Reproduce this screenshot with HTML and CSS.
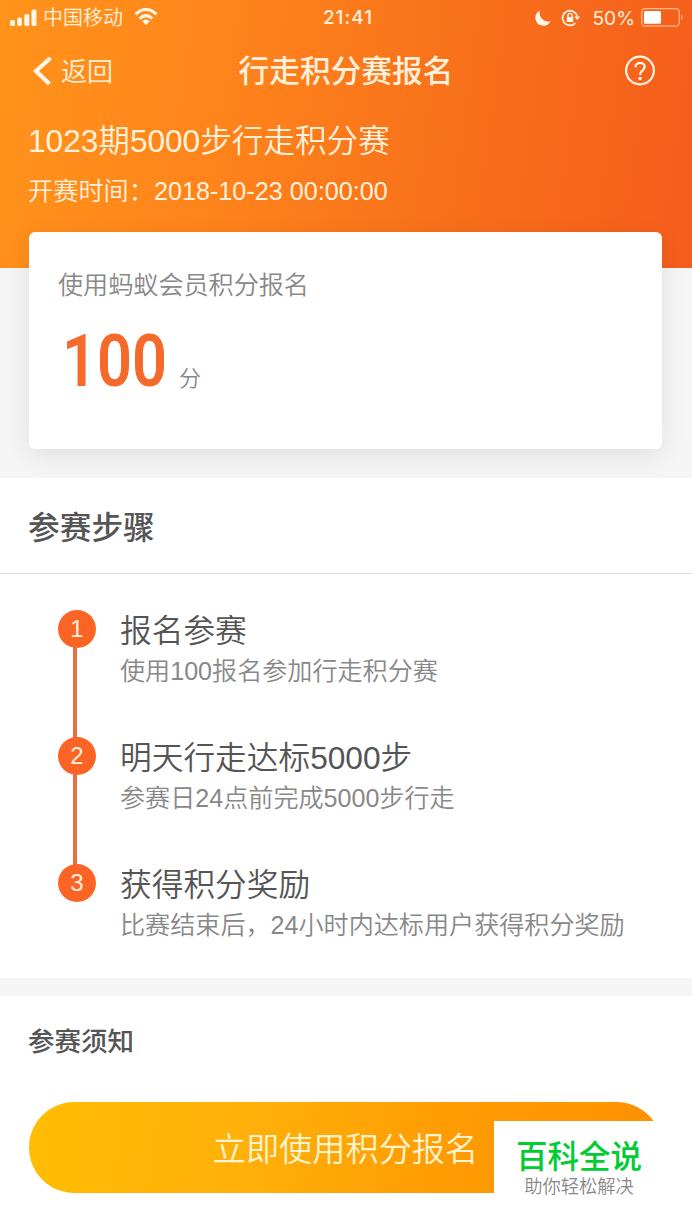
FILE: index.html
```
<!DOCTYPE html>
<html lang="zh-CN">
<head>
    <meta charset="UTF-8">
    <meta name="viewport" content="width=device-width, initial-scale=1.0">
    <title>行走积分赛报名</title>
    <link rel="stylesheet" href="styles.css">
</head>
<body>
    <header class="header">
        <div class="status-bar">
            <div class="status-left">
                <svg class="signal" width="28" height="18" viewBox="0 0 28 18" fill="#fff6e6">
                    <rect x="0" y="11" width="5" height="6" rx="1.5"/>
                    <rect x="7.3" y="8.5" width="4.6" height="8.5" rx="1.5"/>
                    <rect x="14.3" y="5" width="5" height="12" rx="1.5"/>
                    <rect x="21.5" y="0.5" width="5" height="16.5" rx="1.5"/>
                </svg>
                <span class="carrier">中国移动</span>
                <svg class="wifi" width="24" height="18" viewBox="0 0 24 18" fill="none" stroke="#fff6e6" stroke-width="3">
                    <path d="M1.6 6.4Q12 -3.4 22.4 6.4"/>
                    <path d="M5.7 10.6Q12 4.6 18.3 10.6"/>
                    <path d="M8.2 13.2Q12 9.6 15.8 13.2L12 17.2Z" fill="#fff6e6" stroke="none"/>
                </svg>
            </div>
            <span class="time">21:41</span>
            <div class="status-right">
                <svg width="16" height="16" viewBox="0 0 16 16" fill="#fff6e6">
                    <path d="M5 .5A8 8 0 1 0 15.6 11.2A8.6 8.6 0 0 1 5 .5Z"/>
                </svg>
                <svg class="lock" width="20" height="18" viewBox="0 0 20 18" fill="none" stroke="#fff6e6">
                    <path d="M14.3 14.1A7.4 7.4 0 1 1 16.2 7.4" stroke-width="1.7"/>
                    <path d="M13.2 7.4H19.2L16.2 11Z" fill="#fff6e6" stroke="none"/>
                    <rect x="5.8" y="8" width="6.4" height="5" fill="#fff6e6" stroke="none"/>
                    <path d="M7 8V6.4a2 2 0 0 1 4 0V8" stroke-width="1.4"/>
                </svg>
                <span class="percent">50%</span>
                <svg width="43" height="19" viewBox="0 0 43 19" fill="none">
                    <rect x=".7" y=".7" width="37.6" height="17.4" rx="3.5" stroke="#ffb98c" stroke-width="1.3"/>
                    <rect x="3" y="3" width="17" height="12.8" rx="1.5" fill="#fff"/>
                    <path d="M40.5 6.2Q42.6 9.4 40.5 12.6Z" fill="#ffb98c"/>
                </svg>
            </div>
        </div>

        <nav class="nav-bar">
            <a class="back">
                <svg width="20" height="28" viewBox="0 0 20 28" fill="none" stroke="#fff6e6" stroke-width="4.2">
                    <path d="M18.5 1L4 14L17.5 27"/>
                </svg>
                <span>返回</span>
            </a>
            <h1>行走积分赛报名</h1>
            <a class="help">
                <svg width="32" height="32" viewBox="0 0 32 32" fill="none" stroke="#fff6e6">
                    <circle cx="16" cy="15.5" r="13.9" stroke-width="2.2"/>
                    <path d="M11.5 12.2c0-5.8 9.2-5.6 9.2-.4 0 3.6-4.6 4-4.6 7.5v.8" stroke-width="2.3"/>
                    <circle cx="16.1" cy="23.5" r="1.7" fill="#fff6e6" stroke="none"/>
                </svg>
            </a>
        </nav>

        <div class="match">
            <h2>1023期5000步行走积分赛</h2>
            <p>开赛时间：2018-10-23 00:00:00</p>
        </div>
    </header>

    <div class="card">
        <p class="card-label">使用蚂蚁会员积分报名</p>
        <div class="score">
            <span class="number">100</span>
            <span class="unit">分</span>
        </div>
    </div>

    <section class="steps">
        <h3>参赛步骤</h3>
        <ol class="step-list">
            <li class="step">
                <span class="circle">1</span>
                <div class="step-text">
                    <h4>报名参赛</h4>
                    <p>使用100报名参加行走积分赛</p>
                </div>
            </li>
            <li class="step">
                <span class="circle">2</span>
                <div class="step-text">
                    <h4>明天行走达标5000步</h4>
                    <p>参赛日24点前完成5000步行走</p>
                </div>
            </li>
            <li class="step">
                <span class="circle">3</span>
                <div class="step-text">
                    <h4>获得积分奖励</h4>
                    <p>比赛结束后，24小时内达标用户获得积分奖励</p>
                </div>
            </li>
        </ol>
    </section>

    <section class="notice">
        <h3>参赛须知</h3>
        <button class="submit" type="button">立即使用积分报名</button>
    </section>

    <div class="badge">
        <strong>百科全说</strong>
        <span>助你轻松解决</span>
    </div>
</body>
</html>
```
FILE: styles.css
```
* {
    margin: 0;
    padding: 0;
    box-sizing: border-box;
}

body {
    position: relative;
    height: 1230px;
    overflow: hidden;
    font-family: "Liberation Sans", "Noto Sans CJK SC DemiLight", "Noto Sans CJK SC", sans-serif;
    font-weight: 350;
    color: #555;
    background: #f5f5f5;
}

h1,
h3,
strong {
    font-family: "Liberation Sans", "Noto Sans CJK SC", sans-serif;
    font-weight: 500;
}

svg {
    display: block;
    flex: none;
}

.header {
    height: 268px;
    color: #fff1dc;
    background: linear-gradient(98deg, #ff931b 0%, #ff841b 32%, #f8701b 65%, #f55d1c 100%);
}

.status-bar {
    display: grid;
    grid-template-columns: 1fr auto 1fr;
    align-items: center;
    height: 35px;
    padding: 0 8px 0 10px;
}

.status-left,
.status-right {
    display: flex;
    align-items: center;
}

.status-right {
    justify-content: flex-end;
}

.signal {
    margin-right: 5px;
}

.carrier {
    padding-top: 1px;
    font-size: 20px;
    line-height: 34px;
}

.wifi {
    margin-left: 11px;
    margin-bottom: 2px;
}

.time {
    padding-left: 2px;
    font-family: Inter, sans-serif;
    font-size: 19px;
    font-weight: 500;
    letter-spacing: 1px;
}

.lock {
    margin-left: 10px;
}

.percent {
    margin: 0 6px 0 11px;
    font-family: Inter, sans-serif;
    font-size: 19.2px;
    font-weight: 400;
}

.nav-bar {
    display: grid;
    grid-template-columns: 1fr auto 1fr;
    align-items: center;
    height: 70px;
    padding: 1px 36px 0 32px;
}

.back {
    display: flex;
    align-items: center;
    gap: 9px;
    font-size: 26px;
    line-height: 36px;
}

.back span {
    padding-top: 2px;
}

.nav-bar h1 {
    padding: 3px 0 0 4px;
    font-size: 30.7px;
    line-height: 44px;
}

.help {
    justify-self: end;
}

.match {
    padding: 14px 28px 0;
}

.match h2 {
    font-size: 31.6px;
    font-weight: 350;
    line-height: 44px;
}

.match p {
    margin-top: 10px;
    font-size: 25.2px;
    line-height: 36px;
}

.card {
    height: 217px;
    margin: -36px 30px 0 29px;
    padding: 35px 29px 0;
    border-radius: 6px;
    background: #fff;
    box-shadow: 0 6px 24px rgba(0, 0, 0, 0.09);
}

.card-label {
    font-size: 25.1px;
    line-height: 36px;
    color: #888;
}

.score {
    display: flex;
    align-items: baseline;
    margin-top: 16px;
}

.number {
    width: 117px;
    margin-left: 4px;
    font-family: Roboto, sans-serif;
    font-size: 73px;
    font-weight: 600;
    line-height: 84px;
    color: #f6692b;
    transform: scaleX(0.84);
    transform-origin: left;
}

.unit {
    font-size: 22px;
    color: #888;
}

.steps {
    height: 500px;
    margin-top: 29px;
    background: #fff;
}

.steps h3 {
    height: 96px;
    padding: 2px 0 0 28px;
    border-bottom: 1px solid #dcdcdc;
    font-size: 31.7px;
    line-height: 96px;
}

.step-list {
    padding: 36px 0 0 58px;
    list-style: none;
}

.step {
    position: relative;
    display: flex;
    gap: 24px;
    height: 127px;
}

/* line to the next step */
.step:not(:last-child)::before {
    content: "";
    position: absolute;
    top: 37px;
    left: 15px;
    width: 4px;
    height: 92px;
    background: #e66f43;
}

.circle {
    width: 38px;
    height: 38px;
    border-radius: 50%;
    font-size: 24px;
    line-height: 38px;
    text-align: center;
    color: #fff1dc;
    background: #fc6426;
}

.step-text h4 {
    padding-top: 1px;
    font-size: 31.7px;
    font-weight: 350;
    line-height: 40px;
}

.step-text p {
    font-size: 25.1px;
    line-height: 36px;
    margin-top: 2px;
    color: #888;
}

.notice {
    height: 234px;
    margin-top: 18px;
    padding: 25px 30px 0 29px;
    background: #fff;
}

.notice h3 {
    margin-left: -1px;
    font-size: 26.5px;
    line-height: 42px;
}

.submit {
    display: block;
    width: 100%;
    height: 91px;
    margin-top: 39px;
    padding-bottom: 2px;
    border: none;
    border-radius: 46px;
    font-family: inherit;
    font-size: 33.2px;
    font-weight: 350;
    color: #fff3d0;
    background: linear-gradient(98deg, #ffbd02 0%, #ffb00a 35%, #ff9c04 65%, #ff9000 100%);
}

.badge {
    position: absolute;
    top: 1121px;
    left: 494px;
    display: flex;
    flex-direction: column;
    align-items: center;
    width: 174px;
    height: 88px;
    padding: 16px 4px 0 0;
    background: #fff;
}

.badge strong {
    font-size: 31.5px;
    line-height: 40px;
    color: #0c3;
}

.badge span {
    font-size: 18.3px;
    line-height: 20px;
    color: #888;
}
```
